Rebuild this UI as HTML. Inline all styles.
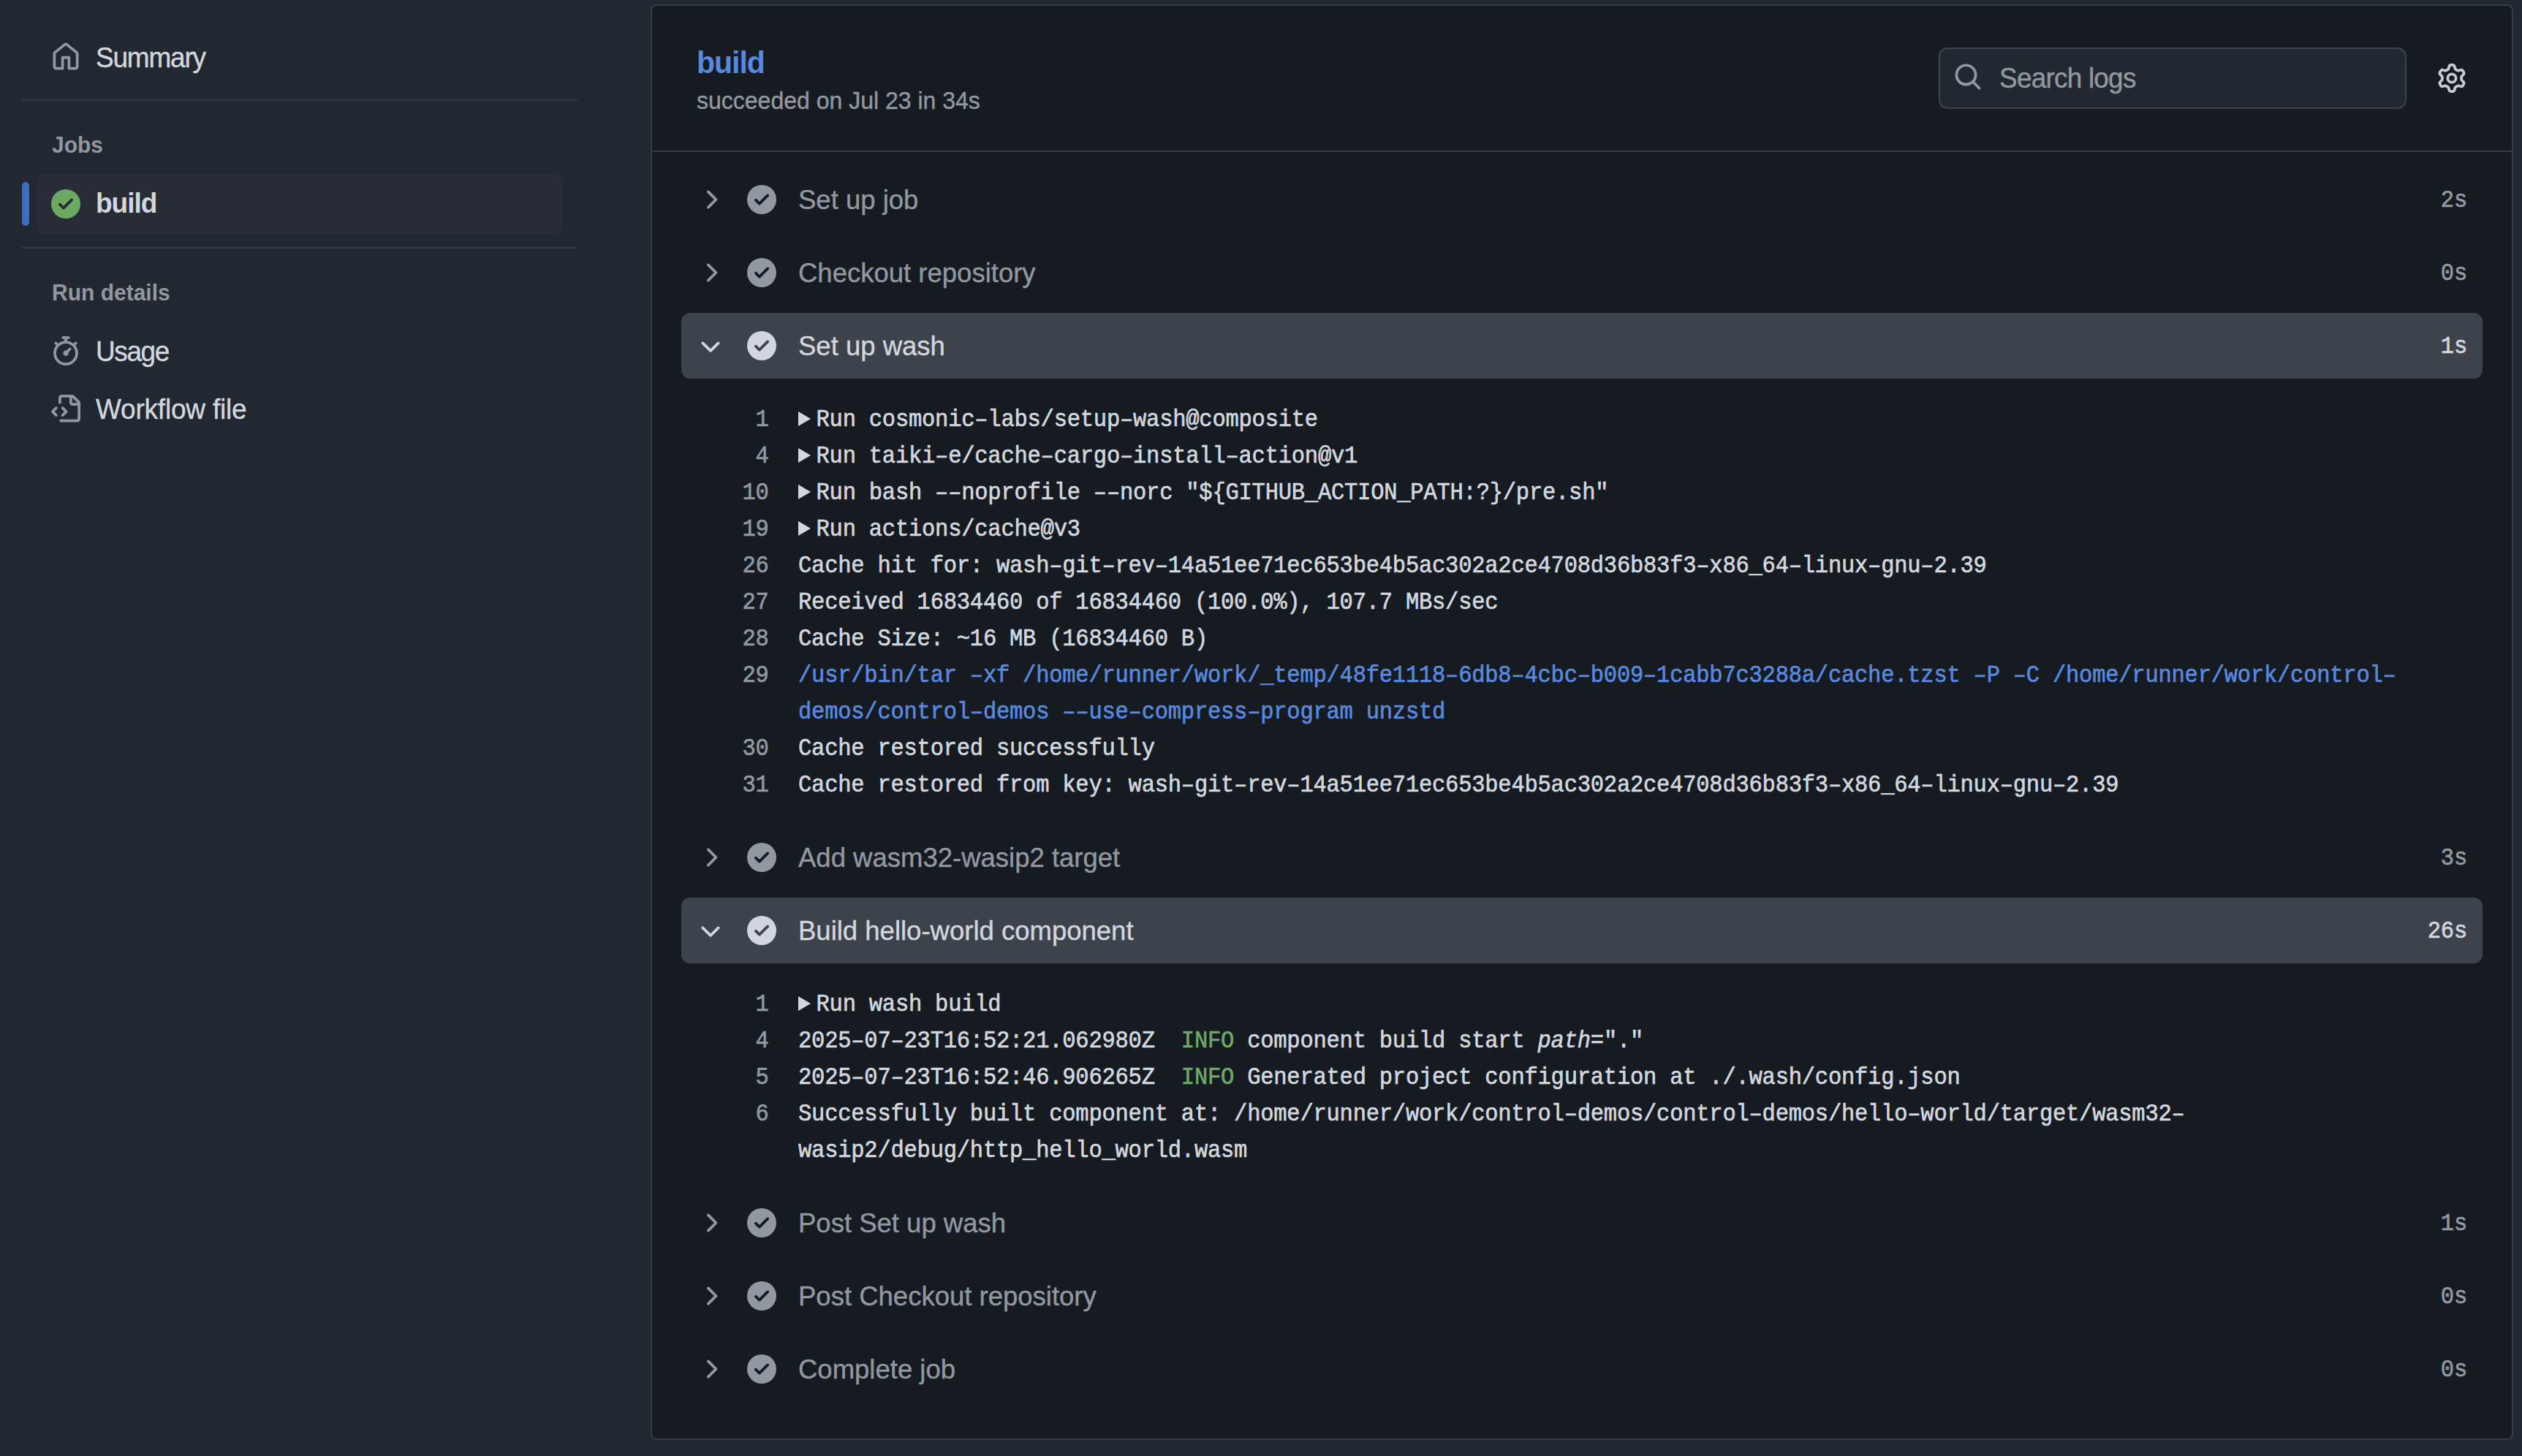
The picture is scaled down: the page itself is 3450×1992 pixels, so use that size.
<!DOCTYPE html>
<html><head><meta charset="utf-8"><title>build</title>
<style>
html,body{margin:0;padding:0;}
body{width:3450px;height:1992px;background:#22282f;position:relative;overflow:hidden;}
.t{position:absolute;white-space:pre;}
.s{font-family:"Liberation Sans",sans-serif;}
.m{font-family:"Liberation Mono",monospace;}
.b{position:absolute;}
.i{position:absolute;overflow:visible;}
</style></head><body>
<svg class="i" style="left:70.00px;top:57.50px;width:40px;height:40px;" viewBox="0 0 16 16"><path fill="#9298a0" d="M6.906.664a1.749 1.749 0 0 1 2.187 0l5.25 4.2c.415.332.657.835.657 1.367v7.019A1.75 1.75 0 0 1 13.25 15h-3.5a.75.75 0 0 1-.75-.75V9H7v5.25a.75.75 0 0 1-.75.75h-3.5A1.75 1.75 0 0 1 1 13.25V6.23c0-.531.242-1.034.657-1.366l5.25-4.2Zm1.25 1.171a.25.25 0 0 0-.312 0l-5.25 4.2a.25.25 0 0 0-.094.196v7.019c0 .138.112.25.25.25H5.5V8.25a.75.75 0 0 1 .75-.75h3.5a.75.75 0 0 1 .75.75v5.25h2.75a.25.25 0 0 0 .25-.25V6.23a.25.25 0 0 0-.094-.195Z"/></svg>
<div class="t s" style="left:131.00px;top:60.97px;font-size:37px;line-height:37px;color:#d2d7df;font-weight:400;letter-spacing:-1.2px;transform:scaleY(1.04);transform-origin:0 31.33px;-webkit-text-stroke:0.4px currentColor;">Summary</div>
<div class="b" style="left:30px;top:136px;width:760px;height:2px;background:#363c43"></div>
<div class="t s" style="left:71.00px;top:184.00px;font-size:30px;line-height:30px;color:#9298a0;font-weight:700;;transform:scaleY(1.04);transform-origin:0 25.40px;-webkit-text-stroke:0px currentColor;">Jobs</div>
<div class="b" style="left:50px;top:238px;width:720px;height:82px;background:#272c35;border-radius:12px"></div>
<div class="b" style="left:30px;top:249px;width:10px;height:60px;background:#416cc4;border-radius:5px"></div>
<svg class="i" style="left:70px;top:259px;width:40px;height:40px" viewBox="0 0 16 16"><circle cx="8" cy="8" r="8" fill="#6ca963"/><path fill="none" stroke="#272c35" stroke-width="1.5" stroke-linecap="round" stroke-linejoin="round" d="M4.75 8.25l2 2 4.5-4.5"/></svg>
<div class="t s" style="left:131.00px;top:260.37px;font-size:37px;line-height:37px;color:#d2d7df;font-weight:700;letter-spacing:-1px;transform:scaleY(1.04);transform-origin:0 31.33px;-webkit-text-stroke:0px currentColor;">build</div>
<div class="b" style="left:30px;top:338px;width:760px;height:2px;background:#363c43"></div>
<div class="t s" style="left:71.00px;top:385.60px;font-size:30px;line-height:30px;color:#9298a0;font-weight:700;;transform:scaleY(1.04);transform-origin:0 25.40px;-webkit-text-stroke:0px currentColor;">Run details</div>
<svg class="i" style="left:70.00px;top:460.00px;width:40px;height:40px;" viewBox="0 0 16 16"><path fill="#9298a0" d="M5.75.75A.75.75 0 0 1 6.5 0h3a.75.75 0 0 1 0 1.5h-.75v1l-.001.041a6.724 6.724 0 0 1 3.464 1.435l.007-.006.75-.75a.749.749 0 0 1 1.275.326.749.749 0 0 1-.215.734l-.75.75-.006.007a6.75 6.75 0 1 1-10.548 0L2.72 5.03l-.75-.75a.751.751 0 0 1 .018-1.042.751.751 0 0 1 1.042-.018l.75.75.007.006A6.72 6.72 0 0 1 7.25 2.541V1.5H6.5a.75.75 0 0 1-.75-.75ZM8 14.5a5.25 5.25 0 1 0-.001-10.501A5.25 5.25 0 0 0 8 14.5Zm.389-6.7 1.33-1.33a.75.75 0 1 1 1.061 1.06L9.45 8.861A1.503 1.503 0 0 1 8 10.75a1.499 1.499 0 1 1 .389-2.95Z"/></svg>
<div class="t s" style="left:131.00px;top:462.67px;font-size:37px;line-height:37px;color:#d2d7df;font-weight:400;letter-spacing:-1.4px;transform:scaleY(1.04);transform-origin:0 31.33px;-webkit-text-stroke:0.4px currentColor;">Usage</div>
<svg class="i" style="left:70.00px;top:540.00px;width:40px;height:40px;" viewBox="0 0 16 16"><path fill="#9298a0" d="M4 1.75C4 .784 4.784 0 5.75 0h5.586c.464 0 .909.184 1.237.513l2.914 2.914c.329.328.513.773.513 1.237v8.586A1.75 1.75 0 0 1 14.25 15h-9a.75.75 0 0 1 0-1.5h9a.25.25 0 0 0 .25-.25V6h-2.75A1.75 1.75 0 0 1 10 4.25V1.5H5.75a.25.25 0 0 0-.25.25v2.5a.75.75 0 0 1-1.5 0Zm1.72 4.97a.75.75 0 0 1 1.06 0l2 2a.75.75 0 0 1 0 1.06l-2 2a.749.749 0 0 1-1.275-.326.749.749 0 0 1 .215-.734l1.47-1.47-1.47-1.470a.75.75 0 0 1 0-1.060ZM3.28 7.78 1.81 9.25l1.47 1.47a.751.751 0 0 1-.018 1.042.751.751 0 0 1-1.042.018l-2-2a.75.75 0 0 1 0-1.06l2-2a.751.751 0 0 1 1.042.018.751.751 0 0 1 .018 1.042Zm8.22-6.218V4.25c0 .138.112.25.25.25h2.688l-.011-.013-2.914-2.914-.013-.011Z"/></svg>
<div class="t s" style="left:131.00px;top:541.97px;font-size:37px;line-height:37px;color:#d2d7df;font-weight:400;letter-spacing:-0.2px;transform:scaleY(1.04);transform-origin:0 31.33px;-webkit-text-stroke:0.4px currentColor;">Workflow file</div>
<div class="b" style="left:890px;top:6px;width:2548px;height:1964px;background:#161b22;border:2px solid #363c43;border-radius:8px;box-sizing:border-box"></div>
<div class="t s" style="left:953.00px;top:65.99px;font-size:41px;line-height:41px;color:#5889df;font-weight:700;letter-spacing:-1px;transform:scaleY(1.04);transform-origin:0 34.71px;-webkit-text-stroke:0px currentColor;">build</div>
<div class="t s" style="left:953.00px;top:122.31px;font-size:32px;line-height:32px;color:#9298a0;font-weight:400;;transform:scaleY(1.04);transform-origin:0 27.09px;-webkit-text-stroke:0.4px currentColor;">succeeded on Jul 23 in 34s</div>
<div class="b" style="left:2652px;top:65px;width:640px;height:84px;background:#22282f;border:2px solid #3e444c;border-radius:12px;box-sizing:border-box"></div>
<svg class="i" style="left:2672.00px;top:85.00px;width:40px;height:40px;" viewBox="0 0 16 16"><path fill="#9298a0" d="M10.68 11.74a6 6 0 0 1-7.922-8.982 6 6 0 0 1 8.982 7.922l3.04 3.04a.749.749 0 0 1-.326 1.275.749.749 0 0 1-.734-.215ZM11.5 7a4.499 4.499 0 1 0-8.997 0A4.499 4.499 0 0 0 11.5 7Z"/></svg>
<div class="t s" style="left:2735.00px;top:89.07px;font-size:37px;line-height:37px;color:#9298a0;font-weight:400;letter-spacing:-0.8px;transform:scaleY(1.04);transform-origin:0 31.33px;-webkit-text-stroke:0.4px currentColor;">Search logs</div>
<svg class="i" style="left:3334.00px;top:87.00px;width:40px;height:40px;" viewBox="0 0 16 16"><path fill="#c5cad3" d="M8 0a8.2 8.2 0 0 1 .701.031C9.444.095 9.99.645 10.16 1.29l.288 1.107c.018.066.079.158.212.224.231.114.454.243.668.386.123.082.233.09.299.071l1.103-.303c.644-.176 1.392.021 1.82.63.27.385.506.792.704 1.218.315.675.111 1.422-.364 1.891l-.814.806c-.049.048-.098.147-.088.294.016.257.016.515 0 .772-.01.147.038.246.088.294l.814.806c.475.469.679 1.216.364 1.891a7.977 7.977 0 0 1-.704 1.217c-.428.61-1.176.807-1.82.63l-1.102-.302c-.067-.019-.177-.011-.3.071a5.909 5.909 0 0 1-.668.386c-.133.066-.194.158-.211.224l-.29 1.106c-.168.646-.715 1.196-1.458 1.26a8.006 8.006 0 0 1-1.402 0c-.743-.064-1.289-.614-1.458-1.26l-.289-1.106c-.018-.066-.079-.158-.212-.224a5.738 5.738 0 0 1-.668-.386c-.123-.082-.233-.09-.299-.071l-1.103.303c-.644.176-1.392-.021-1.820-.630a8.12 8.12 0 0 1-.704-1.218c-.315-.675-.111-1.422.363-1.891l.815-.806c.05-.048.098-.147.088-.294a6.214 6.214 0 0 1 0-.772c.01-.147-.038-.246-.088-.294l-.815-.806C.635 6.045.431 5.298.746 4.623a7.92 7.92 0 0 1 .704-1.217c.428-.61 1.176-.807 1.82-.63l1.102.302c.067.019.177.011.3-.071.214-.143.437-.272.668-.386.133-.066.194-.158.211-.224l.29-1.106C6.009.645 6.556.095 7.299.03 7.530.010 7.764 0 8 0Zm-.571 1.525c-.036.003-.108.036-.137.146l-.289 1.105c-.147.561-.549.967-.998 1.189-.173.086-.34.183-.5.29-.417.278-.97.423-1.529.27l-1.103-.303c-.109-.03-.175.016-.195.045-.22.312-.412.644-.573.99-.014.031-.021.11.059.19l.815.806c.411.406.562.957.53 1.456a4.709 4.709 0 0 0 0 .582c.032.499-.119 1.05-.53 1.456l-.815.806c-.081.08-.073.159-.059.19.162.346.353.677.573.989.02.03.085.076.195.046l1.102-.303c.56-.153 1.113-.008 1.53.27.161.107.328.204.501.29.447.222.85.629.997 1.189l.289 1.105c.029.109.101.143.137.146a6.6 6.6 0 0 0 1.142 0c.036-.003.108-.036.137-.146l.289-1.105c.147-.561.549-.967.998-1.189.173-.086.34-.183.5-.29.417-.278.97-.423 1.529-.27l1.103.303c.109.029.175-.016.195-.045.22-.313.411-.644.573-.99.014-.031.021-.11-.059-.19l-.815-.806c-.411-.406-.562-.957-.53-1.456a4.709 4.709 0 0 0 0-.582c-.032-.499.119-1.05.53-1.456l.815-.806c.081-.08.073-.159.059-.19a6.464 6.464 0 0 0-.573-.989c-.02-.03-.085-.076-.195-.046l-1.102.303c-.56.153-1.113.008-1.53-.27a4.44 4.44 0 0 0-.501-.29c-.447-.222-.85-.629-.997-1.189l-.289-1.105c-.029-.11-.101-.143-.137-.146a6.6 6.6 0 0 0-1.142 0ZM11 8a3 3 0 1 1-6 0 3 3 0 0 1 6 0ZM9.5 8a1.5 1.5 0 1 0-3.001.001A1.5 1.5 0 0 0 9.5 8Z"/></svg>
<div class="b" style="left:892px;top:206px;width:2544px;height:2px;background:#363c43"></div>
<svg class="i" style="left:951.50px;top:253.00px;width:40px;height:40px;" viewBox="0 0 16 16"><path fill="#9298a0" d="M6.22 3.22a.75.75 0 0 1 1.06 0l4.25 4.25a.75.75 0 0 1 0 1.06l-4.25 4.25a.751.751 0 0 1-1.042-.018.751.751 0 0 1-.018-1.042L9.94 8 6.22 4.28a.75.75 0 0 1 0-1.06Z"/></svg>
<svg class="i" style="left:1022px;top:253px;width:40px;height:40px" viewBox="0 0 16 16"><circle cx="8" cy="8" r="8" fill="#9298a0"/><path fill="none" stroke="#161b22" stroke-width="1.5" stroke-linecap="round" stroke-linejoin="round" d="M4.75 8.25l2 2 4.5-4.5"/></svg>
<div class="t s" style="left:1092.00px;top:255.60px;font-size:36.5px;line-height:36.5px;color:#9298a0;font-weight:400;;transform:scaleY(1.0);transform-origin:0 30.90px;-webkit-text-stroke:0.4px currentColor;">Set up job</div>
<div class="t m" style="right:75.00px;top:259.63px;font-size:30.5px;line-height:30.5px;color:#9298a0;font-weight:400;letter-spacing:-0.24px;transform:scaleY(1.1);transform-origin:0 23.37px;-webkit-text-stroke:0.6px currentColor;">2s</div>
<svg class="i" style="left:951.50px;top:353.00px;width:40px;height:40px;" viewBox="0 0 16 16"><path fill="#9298a0" d="M6.22 3.22a.75.75 0 0 1 1.06 0l4.25 4.25a.75.75 0 0 1 0 1.06l-4.25 4.25a.751.751 0 0 1-1.042-.018.751.751 0 0 1-.018-1.042L9.94 8 6.22 4.28a.75.75 0 0 1 0-1.06Z"/></svg>
<svg class="i" style="left:1022px;top:353px;width:40px;height:40px" viewBox="0 0 16 16"><circle cx="8" cy="8" r="8" fill="#9298a0"/><path fill="none" stroke="#161b22" stroke-width="1.5" stroke-linecap="round" stroke-linejoin="round" d="M4.75 8.25l2 2 4.5-4.5"/></svg>
<div class="t s" style="left:1092.00px;top:355.60px;font-size:36.5px;line-height:36.5px;color:#9298a0;font-weight:400;;transform:scaleY(1.0);transform-origin:0 30.90px;-webkit-text-stroke:0.4px currentColor;">Checkout repository</div>
<div class="t m" style="right:75.00px;top:359.63px;font-size:30.5px;line-height:30.5px;color:#9298a0;font-weight:400;letter-spacing:-0.24px;transform:scaleY(1.1);transform-origin:0 23.37px;-webkit-text-stroke:0.6px currentColor;">0s</div>
<div class="b" style="left:932px;top:428px;width:2464px;height:90px;background:#3d434b;border-radius:12px"></div>
<svg class="i" style="left:952.00px;top:455.00px;width:40px;height:40px;" viewBox="0 0 16 16"><path fill="#d2d7df" d="M12.78 5.22a.749.749 0 0 1 0 1.06l-4.25 4.25a.749.749 0 0 1-1.06 0L3.22 6.28a.749.749 0 0 1 .326-1.275.749.749 0 0 1 .734.215L8 8.939l3.72-3.719a.749.749 0 0 1 1.06 0Z"/></svg>
<svg class="i" style="left:1022px;top:453px;width:40px;height:40px" viewBox="0 0 16 16"><circle cx="8" cy="8" r="8" fill="#d2d7df"/><path fill="none" stroke="#3d434b" stroke-width="1.5" stroke-linecap="round" stroke-linejoin="round" d="M4.75 8.25l2 2 4.5-4.5"/></svg>
<div class="t s" style="left:1092.00px;top:455.60px;font-size:36.5px;line-height:36.5px;color:#d2d7df;font-weight:400;;transform:scaleY(1.0);transform-origin:0 30.90px;-webkit-text-stroke:0.4px currentColor;">Set up wash</div>
<div class="t m" style="right:75.00px;top:459.63px;font-size:30.5px;line-height:30.5px;color:#d2d7df;font-weight:400;letter-spacing:-0.24px;transform:scaleY(1.1);transform-origin:0 23.37px;-webkit-text-stroke:0.6px currentColor;">1s</div>
<div class="t m" style="right:2398.40px;top:560.03px;font-size:30.5px;line-height:30.5px;color:#9298a0;font-weight:400;letter-spacing:-0.240px;transform:scaleY(1.1);transform-origin:0 23.37px;-webkit-text-stroke:0.6px currentColor;">1</div>
<svg class="i" style="left:1092px;top:563.10px;width:17px;height:20px" viewBox="0 0 17 20"><path fill="#d2d7df" d="M0 0L17 10L0 20Z"/></svg>
<div class="t m" style="left:1116.50px;top:560.03px;font-size:30.5px;line-height:30.5px;color:#d2d7df;font-weight:400;letter-spacing:-0.240px;transform:scaleY(1.1);transform-origin:0 23.37px;-webkit-text-stroke:0.6px currentColor;">Run cosmonic–labs/setup–wash@composite</div>
<div class="t m" style="right:2398.40px;top:610.03px;font-size:30.5px;line-height:30.5px;color:#9298a0;font-weight:400;letter-spacing:-0.240px;transform:scaleY(1.1);transform-origin:0 23.37px;-webkit-text-stroke:0.6px currentColor;">4</div>
<svg class="i" style="left:1092px;top:613.10px;width:17px;height:20px" viewBox="0 0 17 20"><path fill="#d2d7df" d="M0 0L17 10L0 20Z"/></svg>
<div class="t m" style="left:1116.50px;top:610.03px;font-size:30.5px;line-height:30.5px;color:#d2d7df;font-weight:400;letter-spacing:-0.240px;transform:scaleY(1.1);transform-origin:0 23.37px;-webkit-text-stroke:0.6px currentColor;">Run taiki–e/cache–cargo–install–action@v1</div>
<div class="t m" style="right:2398.40px;top:660.03px;font-size:30.5px;line-height:30.5px;color:#9298a0;font-weight:400;letter-spacing:-0.240px;transform:scaleY(1.1);transform-origin:0 23.37px;-webkit-text-stroke:0.6px currentColor;">10</div>
<svg class="i" style="left:1092px;top:663.10px;width:17px;height:20px" viewBox="0 0 17 20"><path fill="#d2d7df" d="M0 0L17 10L0 20Z"/></svg>
<div class="t m" style="left:1116.50px;top:660.03px;font-size:30.5px;line-height:30.5px;color:#d2d7df;font-weight:400;letter-spacing:-0.240px;transform:scaleY(1.1);transform-origin:0 23.37px;-webkit-text-stroke:0.6px currentColor;">Run bash ––noprofile ––norc "${GITHUB_ACTION_PATH:?}/pre.sh"</div>
<div class="t m" style="right:2398.40px;top:710.03px;font-size:30.5px;line-height:30.5px;color:#9298a0;font-weight:400;letter-spacing:-0.240px;transform:scaleY(1.1);transform-origin:0 23.37px;-webkit-text-stroke:0.6px currentColor;">19</div>
<svg class="i" style="left:1092px;top:713.10px;width:17px;height:20px" viewBox="0 0 17 20"><path fill="#d2d7df" d="M0 0L17 10L0 20Z"/></svg>
<div class="t m" style="left:1116.50px;top:710.03px;font-size:30.5px;line-height:30.5px;color:#d2d7df;font-weight:400;letter-spacing:-0.240px;transform:scaleY(1.1);transform-origin:0 23.37px;-webkit-text-stroke:0.6px currentColor;">Run actions/cache@v3</div>
<div class="t m" style="right:2398.40px;top:760.03px;font-size:30.5px;line-height:30.5px;color:#9298a0;font-weight:400;letter-spacing:-0.240px;transform:scaleY(1.1);transform-origin:0 23.37px;-webkit-text-stroke:0.6px currentColor;">26</div>
<div class="t m" style="left:1092.00px;top:760.03px;font-size:30.5px;line-height:30.5px;color:#d2d7df;font-weight:400;letter-spacing:-0.240px;transform:scaleY(1.1);transform-origin:0 23.37px;-webkit-text-stroke:0.6px currentColor;">Cache hit for: wash–git–rev–14a51ee71ec653be4b5ac302a2ce4708d36b83f3–x86_64–linux–gnu–2.39</div>
<div class="t m" style="right:2398.40px;top:810.03px;font-size:30.5px;line-height:30.5px;color:#9298a0;font-weight:400;letter-spacing:-0.240px;transform:scaleY(1.1);transform-origin:0 23.37px;-webkit-text-stroke:0.6px currentColor;">27</div>
<div class="t m" style="left:1092.00px;top:810.03px;font-size:30.5px;line-height:30.5px;color:#d2d7df;font-weight:400;letter-spacing:-0.240px;transform:scaleY(1.1);transform-origin:0 23.37px;-webkit-text-stroke:0.6px currentColor;">Received 16834460 of 16834460 (100.0%), 107.7 MBs/sec</div>
<div class="t m" style="right:2398.40px;top:860.03px;font-size:30.5px;line-height:30.5px;color:#9298a0;font-weight:400;letter-spacing:-0.240px;transform:scaleY(1.1);transform-origin:0 23.37px;-webkit-text-stroke:0.6px currentColor;">28</div>
<div class="t m" style="left:1092.00px;top:860.03px;font-size:30.5px;line-height:30.5px;color:#d2d7df;font-weight:400;letter-spacing:-0.240px;transform:scaleY(1.1);transform-origin:0 23.37px;-webkit-text-stroke:0.6px currentColor;">Cache Size: ~16 MB (16834460 B)</div>
<div class="t m" style="right:2398.40px;top:910.03px;font-size:30.5px;line-height:30.5px;color:#9298a0;font-weight:400;letter-spacing:-0.240px;transform:scaleY(1.1);transform-origin:0 23.37px;-webkit-text-stroke:0.6px currentColor;">29</div>
<div class="t m" style="left:1092.00px;top:910.03px;font-size:30.5px;line-height:30.5px;color:#5889df;font-weight:400;letter-spacing:-0.240px;transform:scaleY(1.1);transform-origin:0 23.37px;-webkit-text-stroke:0.6px currentColor;">/usr/bin/tar –xf /home/runner/work/_temp/48fe1118–6db8–4cbc–b009–1cabb7c3288a/cache.tzst –P –C /home/runner/work/control–</div>
<div class="t m" style="left:1092.00px;top:960.03px;font-size:30.5px;line-height:30.5px;color:#5889df;font-weight:400;letter-spacing:-0.240px;transform:scaleY(1.1);transform-origin:0 23.37px;-webkit-text-stroke:0.6px currentColor;">demos/control–demos ––use–compress–program unzstd</div>
<div class="t m" style="right:2398.40px;top:1010.03px;font-size:30.5px;line-height:30.5px;color:#9298a0;font-weight:400;letter-spacing:-0.240px;transform:scaleY(1.1);transform-origin:0 23.37px;-webkit-text-stroke:0.6px currentColor;">30</div>
<div class="t m" style="left:1092.00px;top:1010.03px;font-size:30.5px;line-height:30.5px;color:#d2d7df;font-weight:400;letter-spacing:-0.240px;transform:scaleY(1.1);transform-origin:0 23.37px;-webkit-text-stroke:0.6px currentColor;">Cache restored successfully</div>
<div class="t m" style="right:2398.40px;top:1060.03px;font-size:30.5px;line-height:30.5px;color:#9298a0;font-weight:400;letter-spacing:-0.240px;transform:scaleY(1.1);transform-origin:0 23.37px;-webkit-text-stroke:0.6px currentColor;">31</div>
<div class="t m" style="left:1092.00px;top:1060.03px;font-size:30.5px;line-height:30.5px;color:#d2d7df;font-weight:400;letter-spacing:-0.240px;transform:scaleY(1.1);transform-origin:0 23.37px;-webkit-text-stroke:0.6px currentColor;">Cache restored from key: wash–git–rev–14a51ee71ec653be4b5ac302a2ce4708d36b83f3–x86_64–linux–gnu–2.39</div>
<svg class="i" style="left:951.50px;top:1153.00px;width:40px;height:40px;" viewBox="0 0 16 16"><path fill="#9298a0" d="M6.22 3.22a.75.75 0 0 1 1.06 0l4.25 4.25a.75.75 0 0 1 0 1.06l-4.25 4.25a.751.751 0 0 1-1.042-.018.751.751 0 0 1-.018-1.042L9.94 8 6.22 4.28a.75.75 0 0 1 0-1.06Z"/></svg>
<svg class="i" style="left:1022px;top:1153px;width:40px;height:40px" viewBox="0 0 16 16"><circle cx="8" cy="8" r="8" fill="#9298a0"/><path fill="none" stroke="#161b22" stroke-width="1.5" stroke-linecap="round" stroke-linejoin="round" d="M4.75 8.25l2 2 4.5-4.5"/></svg>
<div class="t s" style="left:1092.00px;top:1155.60px;font-size:36.5px;line-height:36.5px;color:#9298a0;font-weight:400;;transform:scaleY(1.0);transform-origin:0 30.90px;-webkit-text-stroke:0.4px currentColor;">Add wasm32-wasip2 target</div>
<div class="t m" style="right:75.00px;top:1159.63px;font-size:30.5px;line-height:30.5px;color:#9298a0;font-weight:400;letter-spacing:-0.24px;transform:scaleY(1.1);transform-origin:0 23.37px;-webkit-text-stroke:0.6px currentColor;">3s</div>
<div class="b" style="left:932px;top:1228px;width:2464px;height:90px;background:#3d434b;border-radius:12px"></div>
<svg class="i" style="left:952.00px;top:1255.00px;width:40px;height:40px;" viewBox="0 0 16 16"><path fill="#d2d7df" d="M12.78 5.22a.749.749 0 0 1 0 1.06l-4.25 4.25a.749.749 0 0 1-1.06 0L3.22 6.28a.749.749 0 0 1 .326-1.275.749.749 0 0 1 .734.215L8 8.939l3.72-3.719a.749.749 0 0 1 1.06 0Z"/></svg>
<svg class="i" style="left:1022px;top:1253px;width:40px;height:40px" viewBox="0 0 16 16"><circle cx="8" cy="8" r="8" fill="#d2d7df"/><path fill="none" stroke="#3d434b" stroke-width="1.5" stroke-linecap="round" stroke-linejoin="round" d="M4.75 8.25l2 2 4.5-4.5"/></svg>
<div class="t s" style="left:1092.00px;top:1255.60px;font-size:36.5px;line-height:36.5px;color:#d2d7df;font-weight:400;;transform:scaleY(1.0);transform-origin:0 30.90px;-webkit-text-stroke:0.4px currentColor;">Build hello-world component</div>
<div class="t m" style="right:75.00px;top:1259.63px;font-size:30.5px;line-height:30.5px;color:#d2d7df;font-weight:400;letter-spacing:-0.24px;transform:scaleY(1.1);transform-origin:0 23.37px;-webkit-text-stroke:0.6px currentColor;">26s</div>
<div class="t m" style="right:2398.40px;top:1360.03px;font-size:30.5px;line-height:30.5px;color:#9298a0;font-weight:400;letter-spacing:-0.240px;transform:scaleY(1.1);transform-origin:0 23.37px;-webkit-text-stroke:0.6px currentColor;">1</div>
<svg class="i" style="left:1092px;top:1363.10px;width:17px;height:20px" viewBox="0 0 17 20"><path fill="#d2d7df" d="M0 0L17 10L0 20Z"/></svg>
<div class="t m" style="left:1116.50px;top:1360.03px;font-size:30.5px;line-height:30.5px;color:#d2d7df;font-weight:400;letter-spacing:-0.240px;transform:scaleY(1.1);transform-origin:0 23.37px;-webkit-text-stroke:0.6px currentColor;">Run wash build</div>
<div class="t m" style="right:2398.40px;top:1410.03px;font-size:30.5px;line-height:30.5px;color:#9298a0;font-weight:400;letter-spacing:-0.240px;transform:scaleY(1.1);transform-origin:0 23.37px;-webkit-text-stroke:0.6px currentColor;">4</div>
<div class="t m" style="left:1092.00px;top:1410.03px;font-size:30.5px;line-height:30.5px;color:#d2d7df;font-weight:400;letter-spacing:-0.240px;transform:scaleY(1.1);transform-origin:0 23.37px;-webkit-text-stroke:0.6px currentColor;">2025–07–23T16:52:21.062980Z  <span style="color:#6ca963">INFO</span> component build start <i>path</i>="."</div>
<div class="t m" style="right:2398.40px;top:1460.03px;font-size:30.5px;line-height:30.5px;color:#9298a0;font-weight:400;letter-spacing:-0.240px;transform:scaleY(1.1);transform-origin:0 23.37px;-webkit-text-stroke:0.6px currentColor;">5</div>
<div class="t m" style="left:1092.00px;top:1460.03px;font-size:30.5px;line-height:30.5px;color:#d2d7df;font-weight:400;letter-spacing:-0.240px;transform:scaleY(1.1);transform-origin:0 23.37px;-webkit-text-stroke:0.6px currentColor;">2025–07–23T16:52:46.906265Z  <span style="color:#6ca963">INFO</span> Generated project configuration at ./.wash/config.json</div>
<div class="t m" style="right:2398.40px;top:1510.03px;font-size:30.5px;line-height:30.5px;color:#9298a0;font-weight:400;letter-spacing:-0.240px;transform:scaleY(1.1);transform-origin:0 23.37px;-webkit-text-stroke:0.6px currentColor;">6</div>
<div class="t m" style="left:1092.00px;top:1510.03px;font-size:30.5px;line-height:30.5px;color:#d2d7df;font-weight:400;letter-spacing:-0.240px;transform:scaleY(1.1);transform-origin:0 23.37px;-webkit-text-stroke:0.6px currentColor;">Successfully built component at: /home/runner/work/control–demos/control–demos/hello–world/target/wasm32–</div>
<div class="t m" style="left:1092.00px;top:1560.03px;font-size:30.5px;line-height:30.5px;color:#d2d7df;font-weight:400;letter-spacing:-0.240px;transform:scaleY(1.1);transform-origin:0 23.37px;-webkit-text-stroke:0.6px currentColor;">wasip2/debug/http_hello_world.wasm</div>
<svg class="i" style="left:951.50px;top:1653.00px;width:40px;height:40px;" viewBox="0 0 16 16"><path fill="#9298a0" d="M6.22 3.22a.75.75 0 0 1 1.06 0l4.25 4.25a.75.75 0 0 1 0 1.06l-4.25 4.25a.751.751 0 0 1-1.042-.018.751.751 0 0 1-.018-1.042L9.94 8 6.22 4.28a.75.75 0 0 1 0-1.06Z"/></svg>
<svg class="i" style="left:1022px;top:1653px;width:40px;height:40px" viewBox="0 0 16 16"><circle cx="8" cy="8" r="8" fill="#9298a0"/><path fill="none" stroke="#161b22" stroke-width="1.5" stroke-linecap="round" stroke-linejoin="round" d="M4.75 8.25l2 2 4.5-4.5"/></svg>
<div class="t s" style="left:1092.00px;top:1655.60px;font-size:36.5px;line-height:36.5px;color:#9298a0;font-weight:400;;transform:scaleY(1.0);transform-origin:0 30.90px;-webkit-text-stroke:0.4px currentColor;">Post Set up wash</div>
<div class="t m" style="right:75.00px;top:1659.63px;font-size:30.5px;line-height:30.5px;color:#9298a0;font-weight:400;letter-spacing:-0.24px;transform:scaleY(1.1);transform-origin:0 23.37px;-webkit-text-stroke:0.6px currentColor;">1s</div>
<svg class="i" style="left:951.50px;top:1753.00px;width:40px;height:40px;" viewBox="0 0 16 16"><path fill="#9298a0" d="M6.22 3.22a.75.75 0 0 1 1.06 0l4.25 4.25a.75.75 0 0 1 0 1.06l-4.25 4.25a.751.751 0 0 1-1.042-.018.751.751 0 0 1-.018-1.042L9.94 8 6.22 4.28a.75.75 0 0 1 0-1.06Z"/></svg>
<svg class="i" style="left:1022px;top:1753px;width:40px;height:40px" viewBox="0 0 16 16"><circle cx="8" cy="8" r="8" fill="#9298a0"/><path fill="none" stroke="#161b22" stroke-width="1.5" stroke-linecap="round" stroke-linejoin="round" d="M4.75 8.25l2 2 4.5-4.5"/></svg>
<div class="t s" style="left:1092.00px;top:1755.60px;font-size:36.5px;line-height:36.5px;color:#9298a0;font-weight:400;;transform:scaleY(1.0);transform-origin:0 30.90px;-webkit-text-stroke:0.4px currentColor;">Post Checkout repository</div>
<div class="t m" style="right:75.00px;top:1759.63px;font-size:30.5px;line-height:30.5px;color:#9298a0;font-weight:400;letter-spacing:-0.24px;transform:scaleY(1.1);transform-origin:0 23.37px;-webkit-text-stroke:0.6px currentColor;">0s</div>
<svg class="i" style="left:951.50px;top:1853.00px;width:40px;height:40px;" viewBox="0 0 16 16"><path fill="#9298a0" d="M6.22 3.22a.75.75 0 0 1 1.06 0l4.25 4.25a.75.75 0 0 1 0 1.06l-4.25 4.25a.751.751 0 0 1-1.042-.018.751.751 0 0 1-.018-1.042L9.94 8 6.22 4.28a.75.75 0 0 1 0-1.06Z"/></svg>
<svg class="i" style="left:1022px;top:1853px;width:40px;height:40px" viewBox="0 0 16 16"><circle cx="8" cy="8" r="8" fill="#9298a0"/><path fill="none" stroke="#161b22" stroke-width="1.5" stroke-linecap="round" stroke-linejoin="round" d="M4.75 8.25l2 2 4.5-4.5"/></svg>
<div class="t s" style="left:1092.00px;top:1855.60px;font-size:36.5px;line-height:36.5px;color:#9298a0;font-weight:400;;transform:scaleY(1.0);transform-origin:0 30.90px;-webkit-text-stroke:0.4px currentColor;">Complete job</div>
<div class="t m" style="right:75.00px;top:1859.63px;font-size:30.5px;line-height:30.5px;color:#9298a0;font-weight:400;letter-spacing:-0.24px;transform:scaleY(1.1);transform-origin:0 23.37px;-webkit-text-stroke:0.6px currentColor;">0s</div>
</body></html>
